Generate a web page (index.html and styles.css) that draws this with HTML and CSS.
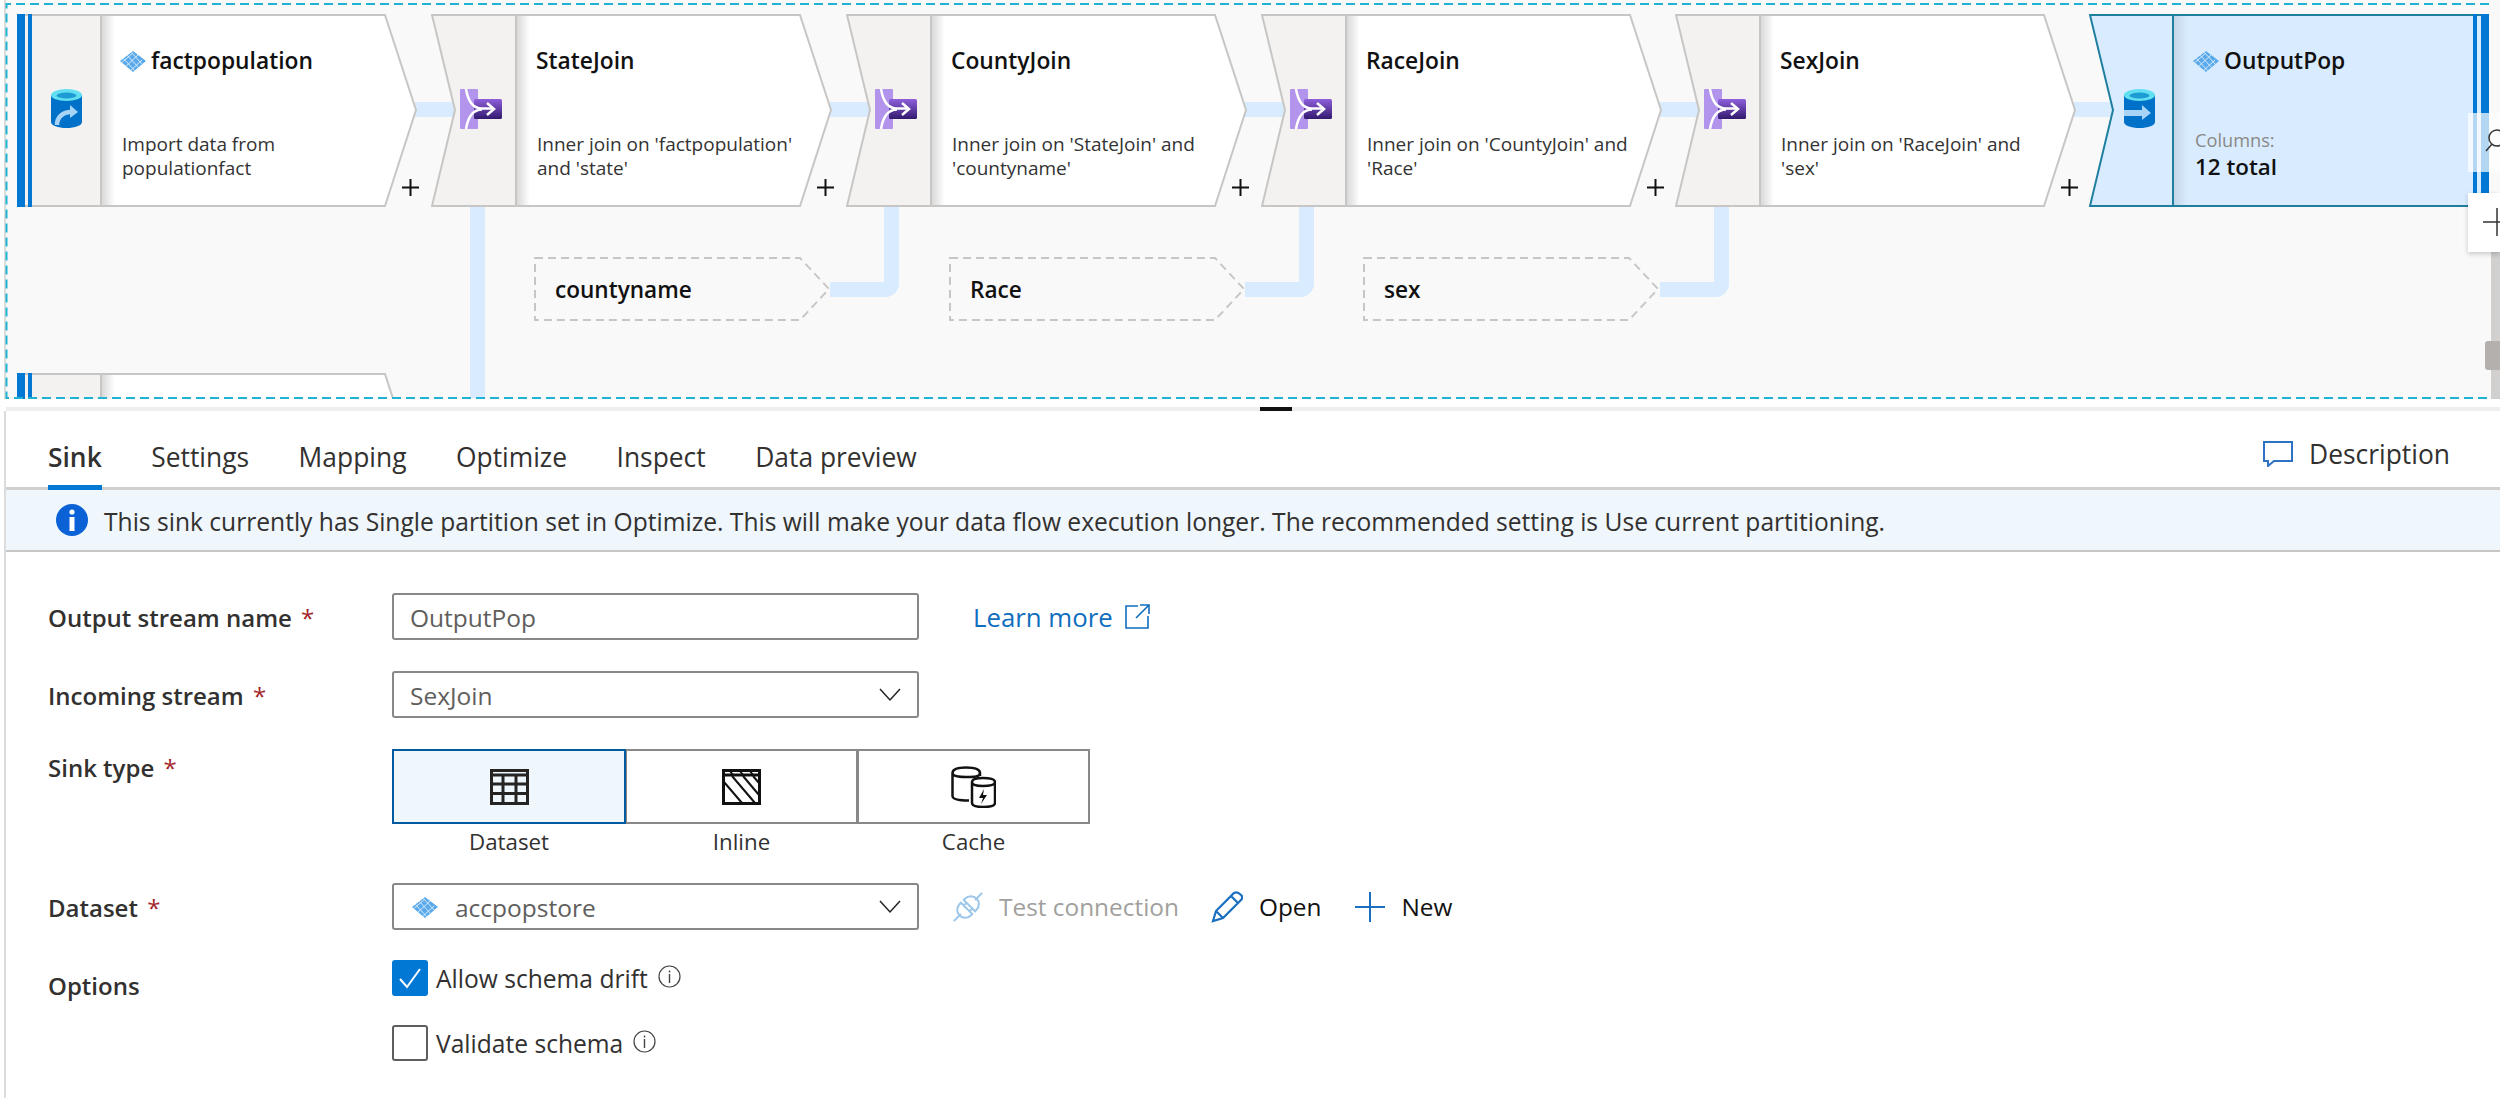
FILE: index.html
```html
<!DOCTYPE html>
<html lang="en">
<head>
    <meta charset="UTF-8">
    <meta name="viewport" content="width=device-width, initial-scale=1.0">
    <title>Data flow - Sink</title>
    <link rel="stylesheet" href="styles.css">
</head>
<body>
    <svg class="defs" width="0" height="0">
        <defs>
            <linearGradient id="edge-shade" x1="0" x2="1" y1="0" y2="0">
                <stop offset="0" stop-color="#000" stop-opacity="0.16"/>
                <stop offset="1" stop-color="#000" stop-opacity="0"/>
            </linearGradient>
            <linearGradient id="join-fill" x1="0" x2="0" y1="0" y2="1">
                <stop offset="0" stop-color="#8f60dc"/>
                <stop offset="1" stop-color="#321a6e"/>
            </linearGradient>
            <clipPath id="diamond-clip"><polygon points="13,0 26,10 13,21 0,10"/></clipPath>
        </defs>
        <symbol id="icon-dataset" viewBox="0 0 26 21">
            <g clip-path="url(#diamond-clip)">
                <rect width="26" height="21" fill="#5aa9ea"/>
                <path d="M2 6L16 21M6 3L20 18M10 0L24 15M0 13L13 2M4 17L18 4M9 21L22 9" stroke="#d4e9fb" stroke-width="1" fill="none"/>
            </g>
        </symbol>
        <symbol id="icon-source" viewBox="0 0 31 39">
            <path d="M0 6V33C0 36.500 7 39 15.500 39S31 36.500 31 33V6Z" fill="#0071c8"/>
            <ellipse cx="15.500" cy="6" rx="15.500" ry="6" fill="#62e0f2"/>
            <ellipse cx="15.500" cy="6.500" rx="10" ry="3" fill="#1d9bd3"/>
            <path d="M6 36C6 28 12 23 20 23" stroke="#a6d3f6" stroke-width="4.500" fill="none"/>
            <polygon points="19,16 27,23 19,29" fill="#a6d3f6"/>
        </symbol>
        <symbol id="icon-sink" viewBox="0 0 31 39">
            <path d="M0 6V33C0 36.500 7 39 15.500 39S31 36.500 31 33V6Z" fill="#0071c8"/>
            <ellipse cx="15.500" cy="6" rx="15.500" ry="6" fill="#62e0f2"/>
            <ellipse cx="15.500" cy="6.500" rx="10" ry="3" fill="#1d9bd3"/>
            <rect x="0" y="21" width="19" height="6" fill="#a6d3f6"/>
            <polygon points="18,16 27,24 18,31" fill="#a6d3f6"/>
        </symbol>
        <symbol id="icon-join" viewBox="0 0 42 40">
            <rect x="0" y="0" width="18" height="40" rx="1" fill="#b294ec"/>
            <rect x="14" y="10" width="28" height="20" rx="1.500" fill="url(#join-fill)"/>
            <path d="M6 0C8 12 13 19.500 22 19.500H33M6 40C8 28 13 20.500 22 20.500" stroke="#fff" stroke-width="2.500" fill="none"/>
            <path d="M27 14L34 20L27 26" stroke="#fff" stroke-width="2.500" fill="none"/>
        </symbol>
        <symbol id="shape-step" viewBox="0 0 402 193">
            <polygon points="1,1 85,1 85,192 1,192 24,96" fill="#f3f2f1"/>
            <polygon points="85,1 369,1 400,96 369,192 85,192" fill="#fff"/>
            <rect x="85" y="2" width="14" height="189" fill="url(#edge-shade)"/>
            <path d="M85 1V192M85 1H369L400 96L369 192H1L24 96L1 1H85" fill="none" stroke="#c8c6c4" stroke-width="2"/>
        </symbol>
        <symbol id="shape-source" viewBox="0 0 402 193">
            <rect x="1" y="1" width="84" height="191" fill="#f3f2f1"/>
            <polygon points="85,1 369,1 400,96 369,192 85,192" fill="#fff"/>
            <rect x="85" y="2" width="14" height="189" fill="url(#edge-shade)"/>
            <path d="M85 1V192M1 1H369L400 96L369 192H1" fill="none" stroke="#c8c6c4" stroke-width="2"/>
            <rect x="1" y="0" width="8" height="193" fill="#0078d4"/>
            <rect x="12" y="0" width="4" height="193" fill="#0078d4"/>
        </symbol>
        <symbol id="shape-ghost" viewBox="0 0 296 64">
            <path d="M1 1H266L295 32L266 63H1Z" fill="none" stroke="#c8c6c4" stroke-width="2" stroke-dasharray="8 5"/>
        </symbol>
        <symbol id="icon-plus" viewBox="0 0 17 17">
            <path d="M8.500 0V17M0 8.500H17" stroke="#111" stroke-width="2"/>
        </symbol>
    </svg>

    <main class="app">
        <section class="canvas">
            <div class="link link-h" style="left:415px;top:102px;width:40px"></div>
            <div class="link link-h" style="left:830px;top:102px;width:40px"></div>
            <div class="link link-h" style="left:1245px;top:102px;width:40px"></div>
            <div class="link link-h" style="left:1660px;top:102px;width:40px"></div>
            <div class="link link-h" style="left:2074px;top:102px;width:40px"></div>
            <div class="link link-v" style="left:470px;top:205px;height:193px"></div>
            <div class="link link-elbow" style="left:830px;top:205px"></div>
            <div class="link link-elbow" style="left:1245px;top:205px"></div>
            <div class="link link-elbow" style="left:1660px;top:205px"></div>

            <div class="node" style="left:16px;top:14px">
                <svg class="node-shape"><use href="#shape-source"/></svg>
                <svg class="node-icon db-icon"><use href="#icon-source"/></svg>
                <div class="node-title has-icon"><svg class="title-icon"><use href="#icon-dataset"/></svg>factpopulation</div>
                <div class="node-desc">Import data from<br>populationfact</div>
                <svg class="node-plus"><use href="#icon-plus"/></svg>
            </div>
            <div class="node" style="left:431px;top:14px">
                <svg class="node-shape"><use href="#shape-step"/></svg>
                <svg class="node-icon join-icon"><use href="#icon-join"/></svg>
                <div class="node-title">StateJoin</div>
                <div class="node-desc">Inner join on 'factpopulation'<br>and 'state'</div>
                <svg class="node-plus"><use href="#icon-plus"/></svg>
            </div>
            <div class="node" style="left:846px;top:14px">
                <svg class="node-shape"><use href="#shape-step"/></svg>
                <svg class="node-icon join-icon"><use href="#icon-join"/></svg>
                <div class="node-title">CountyJoin</div>
                <div class="node-desc">Inner join on 'StateJoin' and<br>'countyname'</div>
                <svg class="node-plus"><use href="#icon-plus"/></svg>
            </div>
            <div class="node" style="left:1261px;top:14px">
                <svg class="node-shape"><use href="#shape-step"/></svg>
                <svg class="node-icon join-icon"><use href="#icon-join"/></svg>
                <div class="node-title">RaceJoin</div>
                <div class="node-desc">Inner join on 'CountyJoin' and<br>'Race'</div>
                <svg class="node-plus"><use href="#icon-plus"/></svg>
            </div>
            <div class="node" style="left:1675px;top:14px">
                <svg class="node-shape"><use href="#shape-step"/></svg>
                <svg class="node-icon join-icon"><use href="#icon-join"/></svg>
                <div class="node-title">SexJoin</div>
                <div class="node-desc">Inner join on 'RaceJoin' and<br>'sex'</div>
                <svg class="node-plus"><use href="#icon-plus"/></svg>
            </div>

            <div class="node node-selected" style="left:2089px;top:14px">
                <svg class="node-shape sink-shape" viewBox="0 0 402 193">
                    <polygon points="1,1 400,1 400,192 1,192 24,96" fill="#d9ecff"/>
                    <rect x="85" y="2" width="14" height="189" fill="url(#edge-shade)" opacity="0.6"/>
                    <path d="M84 1V192M400 1H1L24 96L1 192H400" fill="none" stroke="#1f7f9f" stroke-width="2"/>
                    <rect x="384" y="0" width="4" height="193" fill="#0078d4"/>
                    <rect x="392" y="0" width="8" height="193" fill="#0078d4"/>
                </svg>
                <svg class="node-icon db-icon sink-icon"><use href="#icon-sink"/></svg>
                <div class="node-title has-icon"><svg class="title-icon"><use href="#icon-dataset"/></svg>OutputPop</div>
                <div class="node-cols">
                    <span class="cols-label">Columns:</span>
                    <span class="cols-total">12 total</span>
                </div>
            </div>

            <div class="ghost" style="left:534px;top:257px">
                <svg class="ghost-shape"><use href="#shape-ghost"/></svg>
                <span class="ghost-name">countyname</span>
            </div>
            <div class="ghost" style="left:949px;top:257px">
                <svg class="ghost-shape"><use href="#shape-ghost"/></svg>
                <span class="ghost-name">Race</span>
            </div>
            <div class="ghost" style="left:1363px;top:257px">
                <svg class="ghost-shape"><use href="#shape-ghost"/></svg>
                <span class="ghost-name">sex</span>
            </div>

            <div class="node" style="left:16px;top:373px">
                <svg class="node-shape"><use href="#shape-source"/></svg>
            </div>

            <svg class="selection" width="2500" height="400">
                <path d="M2489 4H6.500V398H2489" fill="none" stroke="#1fb2d2" stroke-width="2" stroke-dasharray="9 5"/>
            </svg>

            <div class="scroll-track"></div>
            <div class="scroll-thumb"></div>
            <div class="zoom-btn zoom-search">
                <svg width="32" height="59" viewBox="0 0 32 59"><circle cx="29" cy="25" r="8" fill="none" stroke="#333" stroke-width="1.500"/><path d="M24 31L18 38" stroke="#333" stroke-width="1.500"/></svg>
            </div>
            <div class="zoom-btn zoom-plus">
                <svg width="32" height="59" viewBox="0 0 32 59"><path d="M15 29H32M29 15V43" stroke="#333" stroke-width="1.500"/></svg>
            </div>
        </section>

        <div class="splitter"><span class="splitter-grip"></span></div>

        <section class="panel">
            <div class="tabs">
                <div class="tab active">Sink</div>
                <div class="tab">Settings</div>
                <div class="tab">Mapping</div>
                <div class="tab">Optimize</div>
                <div class="tab">Inspect</div>
                <div class="tab">Data preview</div>
                <div class="desc-btn">
                    <svg width="30" height="26" viewBox="0 0 30 26"><path d="M1 1H29V20H11L5 25V20H1Z" fill="none" stroke="#2f72c4" stroke-width="2"/></svg>
                    <span>Description</span>
                </div>
            </div>

            <div class="notice">
                <svg width="32" height="32" viewBox="0 0 32 32"><circle cx="16" cy="16" r="16" fill="#0b62d6"/><circle cx="16" cy="8" r="2.600" fill="#fff"/><rect x="13.500" y="13" width="5" height="14" fill="#fff"/></svg>
                <span class="notice-text">This sink currently has Single partition set in Optimize. This will make your data flow execution longer. The recommended setting is Use current partitioning.</span>
            </div>

            <div class="form">
                <div class="row">
                    <label class="field-label">Output stream name <b class="req">*</b></label>
                    <div class="field-line">
                        <div class="input">OutputPop</div>
                        <a class="learn">Learn more
                            <svg width="26" height="26" viewBox="0 0 26 26"><path d="M14 2H2V24H24V12M16 1H25V10M25 1L12 14" fill="none" stroke="#106ebe" stroke-width="1.600"/></svg>
                        </a>
                    </div>
                </div>
                <div class="row">
                    <label class="field-label">Incoming stream <b class="req">*</b></label>
                    <div class="input select">SexJoin
                        <svg class="chevron" width="22" height="14" viewBox="0 0 22 14"><path d="M1 1L11 12L21 1" fill="none" stroke="#222" stroke-width="1.500"/></svg>
                    </div>
                </div>
                <div class="row row-top">
                    <label class="field-label tile-label">Sink type <b class="req">*</b></label>
                    <div class="tiles">
                        <div class="tile selected">
                            <div class="tile-box">
                                <svg width="39" height="36" viewBox="0 0 39 36"><path d="M1.500 1.500H37.500V34.500H1.500ZM1.500 6H37.500M1.500 15H37.500M1.500 24.500H37.500M13 6V34.500M26 6V34.500" fill="none" stroke="#252423" stroke-width="3"/></svg>
                            </div>
                            <span>Dataset</span>
                        </div>
                        <div class="tile">
                            <div class="tile-box">
                                <svg width="39" height="36" viewBox="0 0 39 36"><path d="M1.500 1.500H37.500V34.500H1.500ZM1.500 6H37.500" fill="none" stroke="#111" stroke-width="3"/><path d="M8 2L11 6M18 2L21 6M28 2L31 6M2 13L20 34M10 7L33 34M21 7L37 26M31 7L37 14" fill="none" stroke="#111" stroke-width="2"/></svg>
                            </div>
                            <span>Inline</span>
                        </div>
                        <div class="tile">
                            <div class="tile-box">
                                <svg width="45" height="42" viewBox="0 0 45 42"><path d="M1.500 7V30C1.500 33 7 34.500 18 34.500M1.500 7C1.500 3 7 1.500 15 1.500S29 3 29 7S23 11 15 11S1.500 10 1.500 7ZM29 7V10" fill="none" stroke="#111" stroke-width="2.500"/><path d="M21 16V37C21 40 26 41 32 41S44 40 44 37V16C44 13 38 12 32 12S21 13 21 16C21 19 26 20 32 20S44 19 44 16" fill="#fff" stroke="#111" stroke-width="2.500"/><polygon points="33,23 28,32 32,32 30,38 36,29 32,29" fill="#111"/></svg>
                            </div>
                            <span>Cache</span>
                        </div>
                    </div>
                </div>
                <div class="row">
                    <label class="field-label">Dataset <b class="req">*</b></label>
                    <div class="field-line">
                        <div class="input select dataset-select">
                            <svg class="title-icon"><use href="#icon-dataset"/></svg>
                            accpopstore
                            <svg class="chevron" width="22" height="14" viewBox="0 0 22 14"><path d="M1 1L11 12L21 1" fill="none" stroke="#222" stroke-width="1.500"/></svg>
                        </div>
                        <div class="action disabled">
                            <svg width="30" height="30" viewBox="0 0 30 30"><g transform="rotate(-45 15 15)" fill="none" stroke="#9cc7ea" stroke-width="2"><path d="M-5 15H5M25 15H35"/><path d="M13 7H11A8 8 0 0 0 11 23H13ZM17 7H19A8 8 0 0 1 19 23H17ZM13 11H17M13 19H17"/></g></svg>
                            <span>Test connection</span>
                        </div>
                        <div class="action">
                            <svg width="32" height="32" viewBox="0 0 32 32"><path d="M2 30L5 20L23 2C25 1 28 2 30 4S31 8 30 9L12 27ZM5 20L12 27M20 5L27 12" fill="none" stroke="#1a6fc0" stroke-width="2.200"/></svg>
                            <span>Open</span>
                        </div>
                        <div class="action">
                            <svg width="30" height="30" viewBox="0 0 30 30"><path d="M15 0V30M0 15H30" stroke="#1a6fc0" stroke-width="2"/></svg>
                            <span>New</span>
                        </div>
                    </div>
                </div>
                <div class="row row-top">
                    <label class="field-label options-label">Options</label>
                    <div class="checks">
                        <div class="check-row">
                            <span class="checkbox checked">
                                <svg width="24" height="22" viewBox="0 0 24 22"><path d="M2 12L9 20L22 2" fill="none" stroke="#fff" stroke-width="2"/></svg>
                            </span>
                            <span>Allow schema drift</span>
                            <svg class="info" width="23" height="23" viewBox="0 0 23 23"><circle cx="11.500" cy="11.500" r="10.500" fill="none" stroke="#444" stroke-width="1.200"/><path d="M11.500 9V18M11.500 5.500V7.500" stroke="#444" stroke-width="1.400"/></svg>
                        </div>
                        <div class="check-row">
                            <span class="checkbox"></span>
                            <span>Validate schema</span>
                            <svg class="info" width="23" height="23" viewBox="0 0 23 23"><circle cx="11.500" cy="11.500" r="10.500" fill="none" stroke="#444" stroke-width="1.200"/><path d="M11.500 9V18M11.500 5.500V7.500" stroke="#444" stroke-width="1.400"/></svg>
                        </div>
                    </div>
                </div>
            </div>
        </section>
    </main>
</body>
</html>
```

FILE: styles.css
```css
* {
    box-sizing: border-box;
}

html, body {
    margin: 0;
    padding: 0;
    height: 1098px;
    overflow: hidden;
    background: #fff;
}

body {
    font-family: "Open Sans", "Noto Sans", sans-serif;
    color: #323130;
}

.defs {
    position: absolute;
}

.app {
    width: 2500px;
    height: 1098px;
    display: flex;
    flex-direction: column;
}

/* diagram canvas */
.canvas {
    position: relative;
    width: 2500px;
    height: 399px;
    background: #f9f9f9;
    overflow: hidden;
    clip-path: inset(0 0 0 4px);
    flex: none;
}

.canvas::before {
    content: "";
    position: absolute;
    left: 4px;
    top: 0;
    width: 2px;
    height: 100%;
    background: #dcdcdc;
}

.node {
    position: absolute;
    width: 402px;
    height: 193px;
}

.node-shape {
    position: absolute;
    left: 0;
    top: 0;
    width: 402px;
    height: 193px;
}

.node-icon {
    position: absolute;
    top: 75px;
}

.db-icon {
    left: 35px;
    width: 31px;
    height: 39px;
}

.join-icon {
    left: 29px;
    width: 42px;
    height: 40px;
}

.node-title {
    position: absolute;
    left: 105px;
    top: 31px;
    font-size: 22.800px;
    line-height: 32px;
    font-weight: 600;
    color: #111;
    white-space: nowrap;
    display: flex;
    align-items: center;
}

.node-title.has-icon {
    left: 104px;
}

.title-icon {
    width: 26px;
    height: 21px;
    margin-right: 5px;
    flex: none;
}

.node-desc {
    position: absolute;
    left: 106px;
    top: 118px;
    font-size: 19px;
    line-height: 24px;
    color: #333;
    white-space: nowrap;
}

.node-plus {
    position: absolute;
    left: 386px;
    top: 165px;
    width: 17px;
    height: 17px;
}

.node-cols {
    position: absolute;
    left: 106px;
    top: 115px;
    display: flex;
    flex-direction: column;
}

.cols-label {
    font-size: 18.200px;
    line-height: 22px;
    color: #8a8886;
}

.cols-total {
    font-size: 22.400px;
    line-height: 32px;
    font-weight: 600;
    color: #111;
}

.link {
    position: absolute;
    background: #d9ecff;
}

.link-h {
    height: 15px;
}

.link-v {
    width: 15px;
}

.link-elbow {
    width: 69px;
    height: 92px;
    background: none;
    border-right: 15px solid #d9ecff;
    border-bottom: 15px solid #d9ecff;
    border-bottom-right-radius: 14px;
}

.ghost {
    position: absolute;
    width: 296px;
    height: 64px;
    display: flex;
    align-items: center;
}

.ghost-shape {
    position: absolute;
    left: 0;
    top: 0;
    width: 296px;
    height: 64px;
}

.ghost-name {
    position: relative;
    margin-left: 21px;
    font-size: 22.600px;
    font-weight: 600;
    color: #111;
}

.selection {
    position: absolute;
    left: 0;
    top: 0;
}

.scroll-track {
    position: absolute;
    right: 0;
    top: 252px;
    width: 9px;
    height: 147px;
    background: #d2d0ce;
}

.scroll-thumb {
    position: absolute;
    right: 0;
    top: 341px;
    width: 15px;
    height: 29px;
    background: #b3b0ad;
    border-radius: 3px 0 0 3px;
}

.zoom-btn {
    position: absolute;
    left: 2468px;
    width: 32px;
    height: 59px;
    background: rgba(255, 255, 255, 0.7);
}

.zoom-search {
    top: 113px;
}

.zoom-plus {
    top: 193px;
    background: #fff;
    box-shadow: 0 2px 5px rgba(0, 0, 0, 0.2);
}

.splitter {
    position: relative;
    height: 12px;
    padding-top: 8px;
    margin-left: 6px;
}

.splitter::after {
    content: "";
    display: block;
    height: 4px;
    background: #eeeeee;
}

.splitter-grip {
    position: absolute;
    left: 1254px;
    top: 8px;
    width: 32px;
    height: 4px;
    background: #111;
}

/* bottom panel */
.panel {
    flex: 1;
    margin-left: 4px;
    border-left: 2px solid #dcdcdc;
    display: flex;
    flex-direction: column;
}

.tabs {
    height: 79px;
    display: flex;
    align-items: stretch;
    gap: 49.500px;
    padding: 0 0 0 42px;
    border-bottom: 3px solid #d2d0ce;
    font-size: 26.400px;
}

.tab {
    display: flex;
    align-items: center;
    height: 79px;
    padding-top: 13px;
    white-space: nowrap;
}

.tab.active {
    font-weight: 600;
    box-shadow: inset 0 -5px 0 #0078d4;
}

.desc-btn {
    margin-left: auto;
    padding-right: 50px;
    padding-top: 9px;
    display: flex;
    align-items: center;
    gap: 16px;
    white-space: nowrap;
}

.notice {
    height: 62px;
    background: #eff6fc;
    border-bottom: 2px solid #c8c6c4;
    display: flex;
    align-items: center;
    gap: 16px;
    padding-left: 50px;
    font-size: 24.600px;
    white-space: nowrap;
}

.notice-text {
    padding-top: 2px;
}

.form {
    padding: 41px 0 0 42px;
    display: flex;
    flex-direction: column;
    gap: 31px;
}

.row {
    display: grid;
    grid-template-columns: 344px auto;
    align-items: center;
}

.row-top {
    align-items: start;
}

.field-label {
    padding-top: 2px;
    font-size: 24px;
    font-weight: 600;
    white-space: nowrap;
}

.req {
    color: #a4262c;
    font-weight: 400;
    margin-left: 3px;
}

.tile-label {
    padding-top: 2px;
}

.options-label {
    padding-top: 8px;
}

.field-line {
    display: flex;
    align-items: center;
}

.input {
    position: relative;
    width: 527px;
    height: 47px;
    border: 2px solid #8a8886;
    border-radius: 3px;
    padding: 2px 0 0 16px;
    font-size: 24.500px;
    line-height: 40px;
    color: #605e5c;
    display: flex;
    align-items: center;
    flex: none;
}

.chevron {
    position: absolute;
    right: 16px;
    top: 15px;
}

.learn {
    margin-left: 54px;
    color: #106ebe;
    font-size: 25.800px;
    display: flex;
    align-items: center;
    gap: 11px;
}

.tiles {
    display: flex;
}

.tile {
    width: 233px;
    display: flex;
    flex-direction: column;
    align-items: center;
    font-size: 22.300px;
    line-height: 20px;
    margin-right: -1px;
}

.tile.selected {
    width: 234px;
}

.tile-box {
    width: 100%;
    height: 75px;
    border: 2px solid #8a8886;
    display: flex;
    align-items: center;
    justify-content: center;
    margin-bottom: 8px;
}

.tile.selected .tile-box {
    background: #eff6fc;
    border-color: #005a9e;
    position: relative;
    z-index: 1;
}

.dataset-select .title-icon {
    margin: 0 17px 0 2px;
}

.action {
    display: flex;
    align-items: center;
    gap: 16px;
    font-size: 24.400px;
    color: #111;
    white-space: nowrap;
}

.action.disabled {
    color: #a19f9d;
    margin-left: 34px;
}

.action + .action {
    margin-left: 32px;
}

.action:last-child {
    margin-left: 34px;
}

.checks {
    margin-top: -1px;
    display: flex;
    flex-direction: column;
    gap: 29px;
}

.check-row {
    display: flex;
    align-items: center;
    gap: 8px;
    height: 36px;
    font-size: 24.600px;
    white-space: nowrap;
}

.checkbox {
    width: 36px;
    height: 36px;
    border: 2px solid #605e5c;
    border-radius: 3px;
    display: flex;
    align-items: center;
    justify-content: center;
    flex: none;
}

.checkbox.checked {
    background: #0078d4;
    border-color: #0078d4;
}

.info {
    margin-left: 2px;
    margin-top: -4px;
}
```
